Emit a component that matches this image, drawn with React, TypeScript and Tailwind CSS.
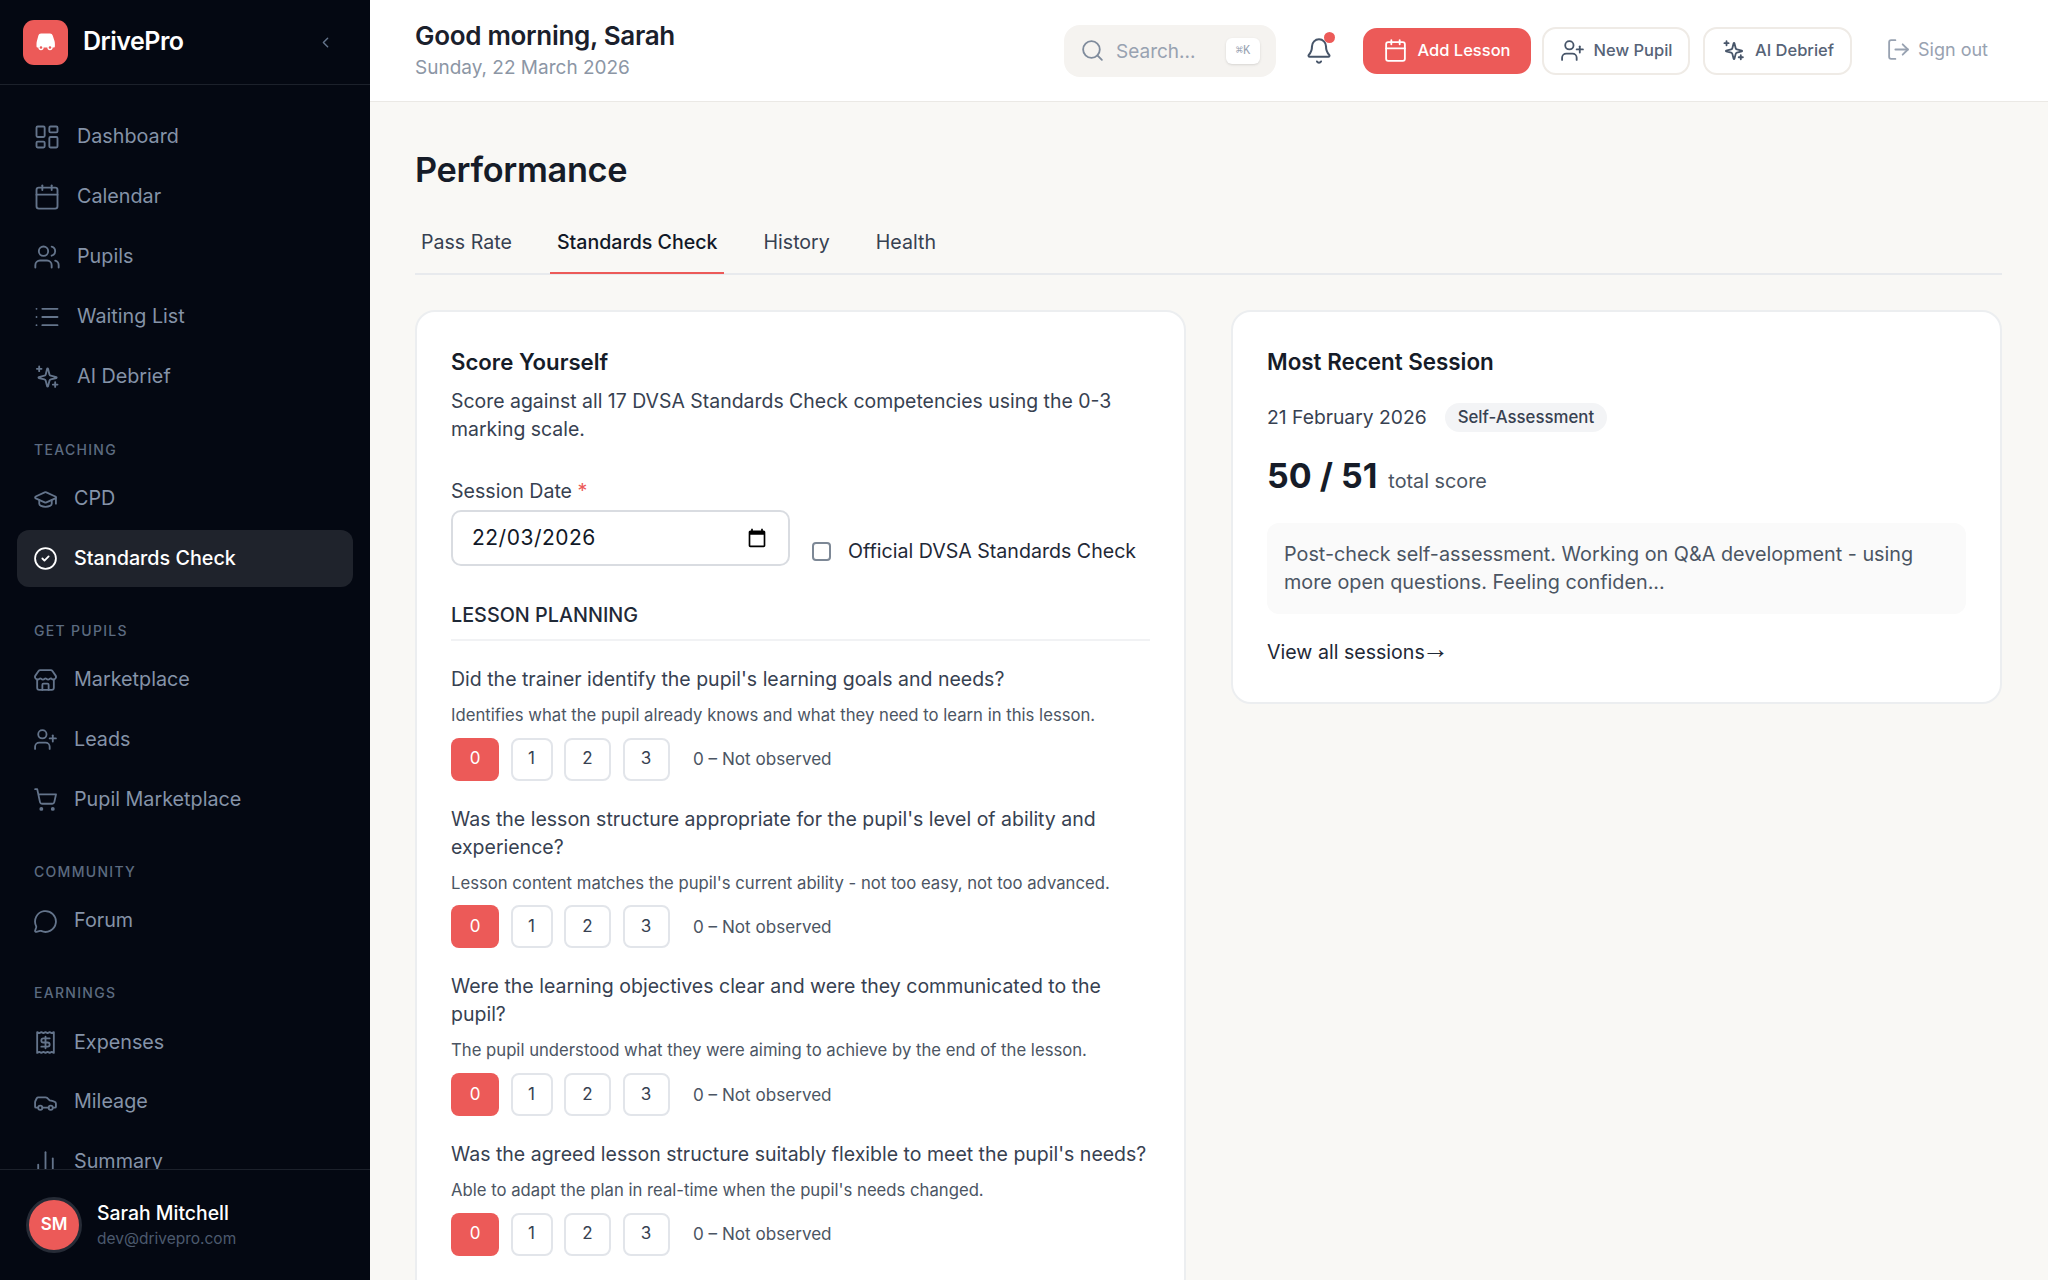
import type { ComponentType } from 'react';
import {
  BarChart2,
  Bell,
  Calendar,
  Car,
  ChevronLeft,
  CircleCheck,
  GraduationCap,
  LayoutDashboard,
  List,
  LogOut,
  MessageCircle,
  Receipt,
  Search,
  ShoppingCart,
  Store,
  UserPlus,
  Users,
} from 'lucide-react';

type Icon = ComponentType<{ className?: string; strokeWidth?: number }>;

const FONT = "font-['Inter','Liberation_Sans',sans-serif]";

// star with a plus top-left and bottom-right, lucide's version has these elsewhere
function Sparkle({ className, strokeWidth = 1.750 }: { className?: string; strokeWidth?: number }) {
  return (
    <svg
      viewBox="0 0 24 24"
      fill="none"
      stroke="currentColor"
      strokeWidth={strokeWidth}
      strokeLinecap="round"
      strokeLinejoin="round"
      className={className}
    >
      <path
        transform="translate(12.500 12.500) scale(.78) translate(-12 -12)"
        strokeWidth={strokeWidth / 0.78}
        d="M9.937 15.500A2 2 0 0 0 8.500 14.063l-6.135-1.582a.5.5 0 0 1 0-.962L8.500 9.936A2 2 0 0 0 9.937 8.500l1.582-6.135a.5.5 0 0 1 .963 0L14.063 8.500A2 2 0 0 0 15.500 9.937l6.135 1.581a.5.5 0 0 1 0 .964L15.500 14.063a2 2 0 0 0-1.437 1.437l-1.582 6.135a.5.5 0 0 1-.963 0z"
      />
      <path d="M5.300 3v4M3.300 5h4" />
      <path d="M19 16.500v4M17 18.500h4" />
    </svg>
  );
}

const TOP_NAV: { label: string; icon: Icon }[] = [
  { label: 'Dashboard', icon: LayoutDashboard },
  { label: 'Calendar', icon: Calendar },
  { label: 'Pupils', icon: Users },
  { label: 'Waiting List', icon: List },
  { label: 'AI Debrief', icon: Sparkle },
];

const GROUPS: { title: string; items: { label: string; icon: Icon; active?: boolean }[] }[] = [
  {
    title: 'TEACHING',
    items: [
      { label: 'CPD', icon: GraduationCap },
      { label: 'Standards Check', icon: CircleCheck, active: true },
    ],
  },
  {
    title: 'GET PUPILS',
    items: [
      { label: 'Marketplace', icon: Store },
      { label: 'Leads', icon: UserPlus },
      { label: 'Pupil Marketplace', icon: ShoppingCart },
    ],
  },
  { title: 'COMMUNITY', items: [{ label: 'Forum', icon: MessageCircle }] },
  {
    title: 'EARNINGS',
    items: [
      { label: 'Expenses', icon: Receipt },
      { label: 'Mileage', icon: Car },
      { label: 'Summary', icon: BarChart2 },
    ],
  },
];

const QUESTIONS = [
  {
    q: "Did the trainer identify the pupil's learning goals and needs?",
    hint: 'Identifies what the pupil already knows and what they need to learn in this lesson.',
  },
  {
    q: "Was the lesson structure appropriate for the pupil's level of ability and experience?",
    hint: "Lesson content matches the pupil's current ability - not too easy, not too advanced.",
  },
  {
    q: 'Were the learning objectives clear and were they communicated to the pupil?',
    hint: 'The pupil understood what they were aiming to achieve by the end of the lesson.',
  },
  {
    q: "Was the agreed lesson structure suitably flexible to meet the pupil's needs?",
    hint: "Able to adapt the plan in real-time when the pupil's needs changed.",
  },
];

function Sidebar() {
  return (
    <aside className="flex h-full w-[370px] shrink-0 flex-col bg-[#040812]">
      <div className="flex h-[85px] shrink-0 items-center border-b border-[#1c212b] pl-[23px] pr-[36px]">
        <div className="flex h-[45px] w-[45px] items-center justify-center rounded-[11px] bg-[#ec5a58]">
          <svg viewBox="0 0 20 20" className="h-[20px] w-[20px]">
            <path
              fill="white"
              d="M5 1.500h9c1.500 0 2.200.8 2.700 2L18.500 9c.3 1 .4 2 .4 3v2c0 1-.5 1.500-1.300 1.500H1.700C.9 15.500.5 15 .5 14v-2c0-1 .1-2 .4-3l1.500-5.500C2.900 2.300 3.500 1.500 5 1.500Z"
            />
            <circle cx="5" cy="15.500" r="2" fill="#ec5a58" stroke="white" strokeWidth="1.300" />
            <circle cx="14" cy="15.500" r="2" fill="#ec5a58" stroke="white" strokeWidth="1.300" />
          </svg>
        </div>
        <span className="ml-[15px] text-[25px] font-semibold tracking-[-0.5px] text-white">DrivePro</span>
        <ChevronLeft className="ml-auto h-[17px] w-[17px] text-[#64748b]" />
      </div>

      <nav className="min-h-0 flex-1 overflow-hidden">
        <div className="flex flex-col pt-[22px]">
          {TOP_NAV.map(({ label, icon: NavIcon }) => (
            <div key={label} className="flex h-[60px] items-center gap-[16.500px] pl-[32.500px] text-[19.750px] text-[#8593a8]">
              <NavIcon className="h-[28px] w-[28px] text-[#64748b]" strokeWidth={1.600} />
              {label}
            </div>
          ))}
        </div>
        {GROUPS.map((group, i) => (
          <div key={group.title} className={`px-[17px] ${i === 0 ? 'mt-[19.500px]' : 'mt-[20.500px]'}`}>
            <div className="pb-[11px] pl-[17px] pt-[13px] text-[14px] font-medium leading-[20px] tracking-[1.300px] text-[#5c6b80]">
              {group.title}
            </div>
            {group.items.map(({ label, icon: NavIcon, active }) => (
              <div
                key={label}
                className={`flex h-[57px] items-center gap-[16.500px] rounded-[12px] pl-[15.500px] text-[19.750px] [&:not(:last-child)]:mb-[2.700px] ${
                  active ? 'bg-[#1f232c] font-medium text-white' : 'text-[#8593a8]'
                }`}
              >
                <NavIcon className={`h-[25px] w-[25px] ${active ? 'text-white' : 'text-[#64748b]'}`} strokeWidth={1.750} />
                {label}
              </div>
            ))}
          </div>
        ))}
      </nav>

      <div className="flex h-[111px] shrink-0 items-center gap-[15px] border-t border-[#1c212b] pl-[26px]">
        <div className="flex h-[56px] w-[56px] items-center justify-center rounded-full border-[3px] border-[#262b36] bg-[#ec5a58] text-[17px] font-semibold text-white">
          SM
        </div>
        <div>
          <div className="text-[19.400px] font-medium leading-[26px] text-white">Sarah Mitchell</div>
          <div className="mt-[1px] text-[15.500px] leading-[24px] text-[#4c5a6e]">dev@drivepro.com</div>
        </div>
      </div>
    </aside>
  );
}

function Header() {
  return (
    <header className="flex h-[102px] shrink-0 items-center border-b border-[#ebe9e5] bg-white pl-[45px] pr-[60px]">
      <div className="pb-[1.500px]">
        <div className="text-[26px] font-semibold leading-[34px] tracking-[-0.300px] text-[#1a202c]">Good morning, Sarah</div>
        <div className="mt-[2.500px] text-[19px] leading-[26px] text-[#8c96a5]">Sunday, 22 March 2026</div>
      </div>
      <div className="ml-auto flex items-center">
        <div className="flex h-[52px] w-[212px] items-center rounded-[16px] bg-[#f5f3f0] pl-[16px] pr-[16px] text-[19px] text-[#98a2b1]">
          <Search className="h-[25px] w-[25px] text-[#7f8b9c]" strokeWidth={1.750} />
          <span className="ml-[11px] pt-[3px]">Search...</span>
          <span className="ml-auto flex h-[26px] w-[34px] items-center justify-center rounded-[6px] bg-white font-['Liberation_Mono',monospace] text-[12px] text-[#98a2b1] shadow-sm">
            ⌘K
          </span>
        </div>
        <div className="relative ml-[28px] flex h-[30px] w-[30px] items-center justify-center">
          <Bell className="h-[28px] w-[28px] text-[#475569]" strokeWidth={1.750} />
          <span className="absolute right-[-1px] top-[-4px] h-[11px] w-[11px] rounded-full bg-[#ec5a58]" />
        </div>
        <button className="ml-[29px] flex h-[46px] w-[168px] items-center justify-center gap-[9px] rounded-[14px] bg-[#ec5a58] text-[16.500px] font-medium text-white">
          <Calendar className="h-[25px] w-[25px]" strokeWidth={1.750} />
          Add Lesson
        </button>
        <button className="ml-[11px] flex h-[48px] w-[148px] items-center justify-center gap-[9px] rounded-[14px] border-2 border-[#efebe6] bg-white text-[16.500px] font-medium text-[#566377]">
          <UserPlus className="h-[25px] w-[25px] text-[#475569]" strokeWidth={1.750} />
          New Pupil
        </button>
        <button className="ml-[13px] flex h-[48px] w-[149px] items-center justify-center gap-[9px] rounded-[14px] border-2 border-[#efebe6] bg-white text-[16.500px] font-medium text-[#566377]">
          <Sparkle className="h-[25px] w-[25px] text-[#475569]" />
          AI Debrief
        </button>
        <div className="ml-[34px] flex items-center gap-[7px] pb-[3px] text-[18px] text-[#98a2b1]">
          <LogOut className="h-[25px] w-[25px]" strokeWidth={1.750} />
          Sign out
        </div>
      </div>
    </header>
  );
}

function ScoreButtons() {
  const boxes = [
    { n: '1', w: 'w-[42px]' },
    { n: '2', w: 'w-[47px]' },
    { n: '3', w: 'w-[47px]' },
  ];
  return (
    <div className="mt-[10.500px] flex items-center gap-[11.500px]">
      <div className="flex h-[43px] w-[48px] items-center justify-center rounded-[8px] bg-[#ec5a58] text-[17px] text-white">0</div>
      {boxes.map((b) => (
        <div
          key={b.n}
          className={`flex h-[43px] ${b.w} items-center justify-center rounded-[8px] border-2 border-[#e2e5ea] bg-white text-[17px] text-[#374151]`}
        >
          {b.n}
        </div>
      ))}
      <span className="ml-[12px] text-[17.100px] text-[#4b5563]">0 – Not observed</span>
    </div>
  );
}

export default function App() {
  return (
    <div className={`flex h-screen w-full overflow-hidden bg-[#f9f8f5] ${FONT}`}>
      <Sidebar />
      <div className="flex min-w-0 flex-1 flex-col">
        <Header />
        <main className="min-h-0 flex-1 overflow-hidden pl-[45px] pr-[46px]">
          <h1 className="mt-[46px] text-[34.300px] font-semibold leading-[44px] tracking-[-0.300px] text-[#161c28]">Performance</h1>

          <div className="mt-[25px] flex h-[58px] items-stretch border-b-2 border-[#e8eaed] text-[19.600px]">
            <div className="flex items-center px-[6px] pb-[4px] text-[#374151]">Pass Rate</div>
            <div className="relative ml-[33px] flex items-center px-[6px] pb-[4px] font-medium text-[#111827]">
              Standards Check
              <span className="absolute bottom-[-1px] left-[-1px] right-[-1px] h-[2px] bg-[#ec5a58]" />
            </div>
            <div className="ml-[34px] flex items-center px-[6px] pb-[4px] text-[#374151]">History</div>
            <div className="ml-[34px] flex items-center px-[6px] pb-[4px] text-[#374151]">Health</div>
          </div>

          <div className="mt-[35px] grid grid-cols-[771px_771px] gap-[45px]">
            <section className="rounded-[20px] border-2 border-[#eceef0] bg-white px-[34px] pb-[40px] pt-[34px]">
              <h2 className="text-[22.200px] font-semibold leading-[32px] text-[#161c28]">Score Yourself</h2>
              <p className="mt-[8.500px] text-[19.450px] leading-[28px] text-[#374151]">
                Score against all 17 DVSA Standards Check competencies using the 0-3 marking scale.
              </p>
              <div className="mt-[34.500px] flex items-end gap-[22px]">
                <div>
                  <div className="text-[19.600px] leading-[28px] text-[#374151]">
                    Session Date <span className="text-[#ec5a58]">*</span>
                  </div>
                  <div className="mt-[5px] flex h-[56px] w-[339px] items-center justify-between rounded-[10px] border-2 border-[#d9dce1] bg-white pl-[19px] pr-[21px] text-[21px] tracking-[0.500px] text-[#111827]">
                    22/03/2026
                    <svg viewBox="0 0 24 24" className="h-[20px] w-[20px]" fill="black">
                      <path d="M20 3h-1V1h-2v2H7V1H5v2H4c-1.100 0-2 .9-2 2v16c0 1.100.9 2 2 2h16c1.100 0 2-.9 2-2V5c0-1.100-.9-2-2-2zm0 18H4V8h16v13z" />
                    </svg>
                  </div>
                </div>
                <div className="flex items-center gap-[17px] text-[19.600px] text-[#1f2937]">
                  <span className="h-[19px] w-[19px] rounded-[4px] border-2 border-[#7d8896] bg-white" />
                  Official DVSA Standards Check
                </div>
              </div>
              <h3 className="mt-[35px] border-b-2 border-[#f1f2f4] pb-[10px] text-[19.800px] font-medium leading-[28px] text-[#1f2937]">
                LESSON PLANNING
              </h3>
              {QUESTIONS.map((item, i) => (
                <div key={item.q} className={i === 0 ? 'mt-[24px]' : 'mt-[24.200px]'}>
                  <div className="text-[19.500px] leading-[28px] text-[#374151]">{item.q}</div>
                  <div className="mt-[10px] text-[16.700px] leading-[24px] text-[#4b5563]">{item.hint}</div>
                  <ScoreButtons />
                </div>
              ))}
            </section>

            <section className="self-start rounded-[20px] border-2 border-[#eceef0] bg-white px-[34px] pb-[36px] pt-[34px]">
              <h2 className="text-[22.400px] font-semibold leading-[32px] text-[#161c28]">Most Recent Session</h2>
              <div className="mt-[25px] flex items-center gap-[18px]">
                <span className="text-[19.300px] text-[#374151]">21 February 2026</span>
                <span className="flex h-[29px] items-center rounded-full bg-[#f3f4f6] px-[13px] text-[16.800px] font-medium text-[#374151]">
                  Self-Assessment
                </span>
              </div>
              <div className="mt-[22px] flex items-baseline gap-[11px]">
                <span className="text-[34px] font-bold leading-[44px] text-[#161c28]">50 / 51</span>
                <span className="text-[19.800px] text-[#4b5563]">total score</span>
              </div>
              <div className="mt-[24.500px] rounded-[12px] bg-[#fafafa] px-[17px] py-[17.500px] text-[19.800px] leading-[28px] text-[#4b5563]">
                Post-check self-assessment. Working on Q&amp;A development - using more open questions. Feeling confiden...
              </div>
              <div className="mt-[24px] flex items-center text-[19.600px] leading-[28px] text-[#1f2937]">
                View all sessions
                <span className="mb-[5px] ml-[-3px] font-['Liberation_Sans',sans-serif] text-[27px] leading-[18px]">→</span>
              </div>
            </section>
          </div>
        </main>
      </div>
    </div>
  );
}
